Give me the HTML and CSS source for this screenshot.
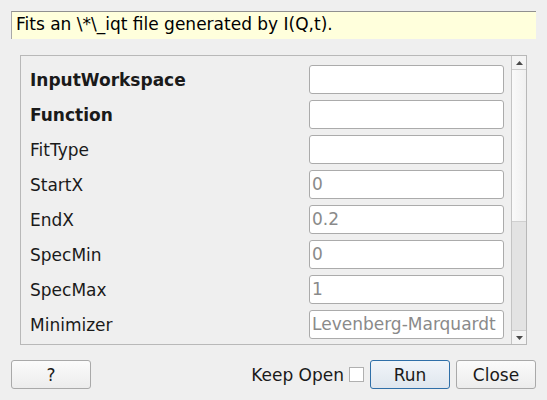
FILE: index.html
```html
<!DOCTYPE html>
<html>
<head>
<meta charset="utf-8">
<link rel="stylesheet" href="styles.css">
</head>
<body>
<div class="dialog">
  <div class="desc">Fits an \*\_iqt file generated by I(Q,t).</div>
  <div class="frame">
    <div class="props">
      <div class="row"><span class="label bold">InputWorkspace</span><div class="field"></div></div>
      <div class="row"><span class="label bold">Function</span><div class="field"></div></div>
      <div class="row"><span class="label">FitType</span><div class="field"></div></div>
      <div class="row"><span class="label">StartX</span><div class="field">0</div></div>
      <div class="row"><span class="label">EndX</span><div class="field">0.2</div></div>
      <div class="row"><span class="label">SpecMin</span><div class="field">0</div></div>
      <div class="row"><span class="label">SpecMax</span><div class="field">1</div></div>
      <div class="row"><span class="label">Minimizer</span><div class="field">Levenberg-Marquardt</div></div>
    </div>
    <div class="scrollbar">
      <div class="sb-btn"><svg width="7" height="4" viewBox="0 0 7 4"><path d="M0 4 L3.5 0 L7 4 Z" fill="#4a4a4a"/></svg></div>
      <div class="sb-handle"></div>
      <div class="sb-groove"></div>
      <div class="sb-btn"><svg width="7" height="4" viewBox="0 0 7 4"><path d="M0 0 L3.5 4 L7 0 Z" fill="#4a4a4a"/></svg></div>
    </div>
  </div>
  <div class="buttons">
    <button class="btn">?</button>
    <div class="spacer"></div>
    <label class="keep">Keep Open <span class="check"></span></label>
    <button class="btn default">Run</button>
    <button class="btn">Close</button>
  </div>
</div>
</body>
</html>
```
FILE: styles.css
```css
html, body {
  margin: 0;
  padding: 0;
  background: #efefef;
}
body {
  font-family: "DejaVu Sans", sans-serif;
  font-size: 17px;
  color: #1a1a1a;
}
.dialog {
  width: 547px;
  height: 400px;
  box-sizing: border-box;
  padding: 11px;
  display: flex;
  flex-direction: column;
}
.desc {
  height: 28px;
  box-sizing: border-box;
  background: #ffffdc;
  border-top: 1px solid #909090;
  border-left: 1px solid #a8a8a8;
  padding: 2px 0 0 4px;
  line-height: 20px;
  color: #000;
  white-space: nowrap;
}
.frame {
  margin: 16px 9px 0 9px;
  height: 290px;
  box-sizing: border-box;
  border: 1px solid #b8b8b8;
  display: flex;
  overflow: hidden;
}
.props {
  flex: 1;
  padding: 9px 7px 0 9px;
  display: flex;
  flex-direction: column;
  gap: 6px;
  overflow: hidden;
}
.row {
  display: flex;
  align-items: center;
  height: 29px;
  flex: none;
}
.label {
  flex: 1;
  color: #1a1a1a;
  line-height: 20px;
}
.bold { font-weight: bold; }
.field {
  width: 195px;
  height: 29px;
  box-sizing: border-box;
  background: #fff;
  border: 1px solid #ababab;
  border-radius: 3px;
  padding: 0 2px;
  line-height: 27px;
  color: #8a8a8a;
  white-space: nowrap;
  overflow: hidden;
}
.scrollbar {
  width: 14px;
  border-left: 1px solid #c4c4c4;
  display: flex;
  flex-direction: column;
  background: #e2e2e2;
}
.sb-btn {
  height: 13px;
  flex: none;
  background: #f4f4f4;
  display: flex;
  align-items: center;
  justify-content: center;
  border-bottom: 1px solid #cfcfcf;
}
.sb-btn:last-child {
  border-bottom: none;
  border-top: 1px solid #cfcfcf;
}
.sb-handle {
  height: 152px;
  flex: none;
  background: linear-gradient(to right, #fafafa, #f0f0f0);
  border-bottom: 1px solid #d0d0d0;
  box-sizing: border-box;
}
.sb-groove {
  flex: 1;
  background: #e3e3e3;
}
.buttons {
  margin-top: 15px;
  display: flex;
  align-items: center;
  height: 29px;
}
.spacer { flex: 1; }
.btn {
  width: 80px;
  height: 29px;
  box-sizing: border-box;
  font-family: "DejaVu Sans", sans-serif;
  font-size: 17px;
  line-height: 20px;
  color: #1a1a1a;
  border: 1px solid #a9a9a9;
  border-radius: 3px;
  background: linear-gradient(to bottom, #fbfbfb, #ececec);
  padding: 0;
}
.btn + .btn { margin-left: 6px; }
.btn.default {
  border-color: #2f6fa8;
  background: linear-gradient(to bottom, #f1f5f9, #dfe6ee);
}
.keep {
  display: flex;
  align-items: center;
  font-size: 17px;
  line-height: 20px;
  margin-right: 6px;
}
.check {
  width: 13px;
  height: 13px;
  margin-left: 5px;
  background: #fff;
  border: 1px solid #b0b0b0;
  display: inline-block;
}
```
